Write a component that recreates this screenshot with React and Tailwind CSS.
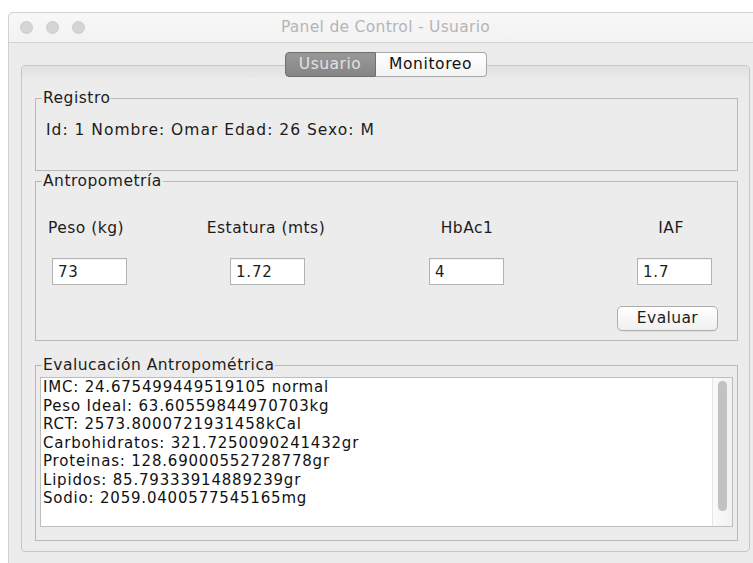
import { useState } from 'react';

const ui = { fontFamily: '"Lucida Grande", "DejaVu Sans", sans-serif' };

const results = [
  'IMC: 24.675499449519105 normal',
  'Peso Ideal: 63.60559844970703kg',
  'RCT: 2573.8000721931458kCal',
  'Carbohidratos: 321.7250090241432gr',
  'Proteinas: 128.69000552728778gr',
  'Lipidos: 85.79333914889239gr',
  'Sodio: 2059.0400577545165mg',
];

const GroupBox = ({ title, className, children }) => (
  <fieldset className={`border border-[#b9b9b9] ${className}`}>
    <legend className="ml-[6px] px-[1px] text-[15.5px] leading-[18px] tracking-[0.5px] text-[#1c1c1c]">{title}</legend>
    {children}
  </fieldset>
);

const Field = ({ value }) => (
  <input
    readOnly
    value={value}
    className="w-[75px] h-[27px] border border-[#b3b3b3] bg-white px-[5px] text-[15px] tracking-[0.8px] text-[#1c1c1c] outline-none shadow-[inset_0_1px_1px_rgba(0,0,0,0.06)]"
  />
);

const App = () => {
  const [tab, setTab] = useState('usuario');

  const tabClass = (name) =>
    tab === name
      ? 'border-[#707070] bg-gradient-to-b from-[#999] to-[#858585] text-[#e2e2e2]'
      : 'border-[#a9a9a9] bg-gradient-to-b from-white to-[#f3f3f3] text-[#111]';

  return (
    <div className="w-[753px] h-[563px] bg-white pt-[12px] pl-[8px] overflow-hidden" style={ui}>
      <div className="flex flex-col w-[755px] h-full border border-b-0 border-[#d2d2d2] rounded-t-[5px] bg-[#ececec]">
        {/* title bar */}
        <div className="grid grid-cols-[1fr_auto_1fr] items-center h-[30px] shrink-0 rounded-t-[5px] bg-gradient-to-b from-[#f8f8f8] to-[#f2f2f2] border-b border-[#d3d3d3]">
          <div className="flex gap-[13px] pl-[11px]">
            <span className="w-[13px] h-[13px] rounded-full bg-[#d5d5d5] border border-[#cbcbcb]" />
            <span className="w-[13px] h-[13px] rounded-full bg-[#d5d5d5] border border-[#cbcbcb]" />
            <span className="w-[13px] h-[13px] rounded-full bg-[#d5d5d5] border border-[#cbcbcb]" />
          </div>
          <div className="text-[15.5px] tracking-[0.3px] text-[#b5b5b5]">Panel de Control - Usuario</div>
          <div />
        </div>

        <div className="flex flex-col px-[12px] pt-[9px]">
          {/* tabs */}
          <div className="relative z-10 flex justify-center h-[25px]">
            <button
              onClick={() => setTab('usuario')}
              className={`w-[91px] rounded-l-[4px] border text-[15.5px] tracking-[0.5px] ${tabClass('usuario')}`}
            >
              Usuario
            </button>
            <button
              onClick={() => setTab('monitoreo')}
              className={`w-[111px] rounded-r-[4px] border border-l-0 text-[15.5px] tracking-[0.6px] ${tabClass('monitoreo')}`}
            >
              Monitoreo
            </button>
          </div>

          {/* tab content */}
          <div className="-mt-[12px] h-[487px] rounded-[4px] border border-[#c6c6c6] bg-[#ececec] overflow-hidden">
            <div className="h-[12px] bg-gradient-to-b from-[#e1e1e1] to-[#e9e9e9]" />
            <div className="flex flex-col pl-[13px] pr-[11px] pt-[11px]">
              <GroupBox title="Registro" className="h-[82px]">
                <div className="pl-[10px] pt-[14px] text-[15.5px] leading-[18px] tracking-[1px] text-[#1c1c1c]">
                  Id: 1 Nombre: Omar Edad: 26 Sexo: M
                </div>
              </GroupBox>

              <GroupBox title="Antropometría" className="mt-[1px] h-[169px]">
                <div className="flex pt-[29px] text-[15.5px] leading-[18px] tracking-[0.5px] text-[#1c1c1c]">
                  <div className="w-[100px] text-center">Peso (kg)</div>
                  <div className="ml-[60px] w-[140px] text-center">Estatura (mts)</div>
                  <div className="ml-[81px] w-[100px] text-center">HbAc1</div>
                  <div className="ml-[124px] w-[60px] text-center">IAF</div>
                </div>
                <div className="flex pt-[21px] pl-[16px]">
                  <Field value="73" />
                  <div className="ml-[103px]"><Field value="1.72" /></div>
                  <div className="ml-[124px]"><Field value="4" /></div>
                  <div className="ml-[133px]"><Field value="1.7" /></div>
                </div>
                <div className="flex justify-end pr-[19px] pt-[21px]">
                  <button className="w-[101px] h-[25px] rounded-[5px] border border-[#adadad] bg-gradient-to-b from-white to-[#f0f0f0] text-[15.5px] tracking-[0.4px] text-[#1c1c1c] shadow-[0_1px_0_rgba(0,0,0,0.05)]">
                    Evaluar
                  </button>
                </div>
              </GroupBox>

              <GroupBox title="Evalucación Antropométrica" className="mt-[15px] h-[185px]">
                <div className="mx-[4px] mt-[3px] flex h-[150px] border border-[#bdbdbd] bg-white">
                  <div className="flex-1 pl-[2px] text-[15px] leading-[18.5px] tracking-[0.8px] text-[#111]">
                    {results.map((line) => (
                      <div key={line}>{line}</div>
                    ))}
                  </div>
                  <div className="w-[20px] border-l border-[#e6e6e6] bg-gradient-to-r from-[#fafafa] to-[#f1f1f1] pl-[5px] pt-[3px]">
                    <div className="h-[130px] w-[9px] rounded-full bg-[#c2c2c2]" />
                  </div>
                </div>
              </GroupBox>
            </div>
          </div>
        </div>
      </div>
    </div>
  );
};

export default App;
